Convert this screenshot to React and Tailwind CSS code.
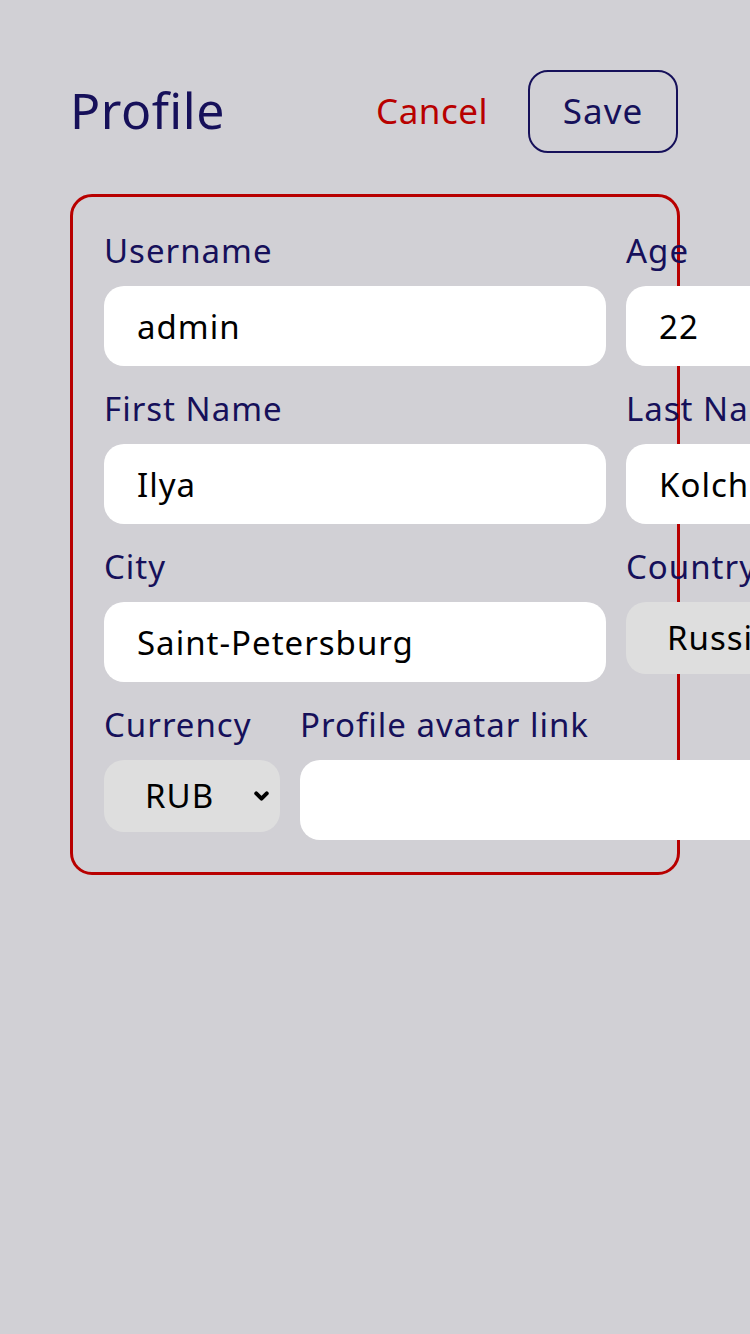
import { ChevronDown } from 'lucide-react';

const NAVY = 'text-[#16105a]';

function Field({ label, children, className = '' }) {
  return (
    <div className={`flex flex-col ${className}`}>
      <label className={`${NAVY} text-[33px] tracking-[1px] leading-[36px] mb-[17px] whitespace-nowrap`}>{label}</label>
      {children}
    </div>
  );
}

function TextInput({ value = '' }) {
  return (
    <input
      defaultValue={value}
      className="w-full h-[80px] rounded-[20px] bg-white px-[33px] text-[33px] tracking-[1px] text-black outline-none"
    />
  );
}

function Select({ value, options, className = '', pad = 'pl-[41px]' }) {
  return (
    <div className={`relative ${className}`}>
      <select
        defaultValue={value}
        className={`w-full h-[72px] appearance-none rounded-[20px] bg-[#dedede] ${pad} pr-10 text-[33px] tracking-[1px] text-black outline-none`}
      >
        {options.map((o) => (
          <option key={o}>{o}</option>
        ))}
      </select>
      <ChevronDown className="absolute right-[8px] top-1/2 -translate-y-1/2 text-black pointer-events-none" size={21} strokeWidth={4.5} />
    </div>
  );
}

export default function App() {
  return (
    <div
      className="min-h-screen bg-[#d1d0d5] pl-[70px] pt-[70px] overflow-hidden"
      style={{ fontFamily: "'Noto Sans', sans-serif" }}
    >
      <div className="flex items-center w-[608px]">
        <h1 className={`${NAVY} text-[50px] tracking-[0.5px] leading-none flex-1 pb-[4px]`}>Profile</h1>
        <button className="text-[#b80000] text-[35px] tracking-[0.5px] mr-[40px]">Cancel</button>
        <button className={`${NAVY} text-[35px] tracking-[1px] w-[150px] h-[83px] rounded-[20px] border-2 border-[#16105a]`}>Save</button>
      </div>

      <div className="w-[610px] mt-[41px] border-[3px] border-[#b80000] rounded-[22px] pl-[31px] pt-[36px] pb-[32px]">
        <div className="grid grid-cols-[502px_502px] gap-x-[20px] gap-y-[25px] w-[1024px]">
          <Field label="Username">
            <TextInput value="admin" />
          </Field>
          <Field label="Age">
            <TextInput value="22" />
          </Field>
          <Field label="First Name">
            <TextInput value="Ilya" />
          </Field>
          <Field label="Last Name">
            <TextInput value="Kolchin" />
          </Field>
          <Field label="City">
            <TextInput value="Saint-Petersburg" />
          </Field>
          <Field label="Country">
            <Select value="Russia" options={['Russia', 'Belarus', 'Ukraine', 'Kazakhstan']} className="w-[240px]" />
          </Field>
        </div>
        <div className="flex gap-x-[20px] mt-[25px] w-[1024px]">
          <Field label="Currency" className="w-[176px]">
            <Select value="RUB" options={['RUB', 'USD', 'EUR']} />
          </Field>
          <Field label="Profile avatar link" className="w-[502px]">
            <TextInput />
          </Field>
        </div>
      </div>
    </div>
  );
}
